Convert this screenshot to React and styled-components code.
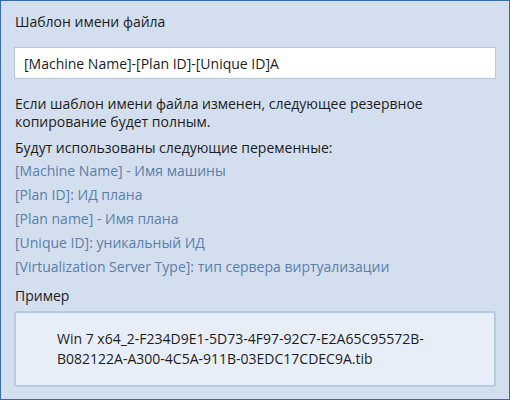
import styled, { createGlobalStyle } from "styled-components";

const GlobalStyle = createGlobalStyle`
  html, body {
    margin: 0;
    padding: 0;
    background: #d3deee;
  }
  body {
    font-family: "Open Sans", "Noto Sans", sans-serif;
  }
`;

const Panel = styled.div`
  box-sizing: border-box;
  width: 510px;
  height: 400px;
  border: 1px solid #3a6ab0;
  background: #d3deee;
  padding: 11px 13px 0 13px;
  display: flex;
  flex-direction: column;
  color: #1c1c1c;
  font-size: 14px;
`;

const Label = styled.div`
  line-height: 20px;
  padding-left: 1px;
  margin-bottom: ${(p) => p.$gap || 0}px;
`;

const Input = styled.input`
  box-sizing: border-box;
  width: 482px;
  height: 32px;
  border: 1px solid #b6c7e0;
  background: #fff;
  padding: 0 9px;
  font: inherit;
  font-size: 14px;
  color: #1c1c1c;
  outline: none;
  margin-bottom: 16px;
`;

const Para = styled.p`
  margin: 0 0 ${(p) => p.$gap || 0}px;
  padding-left: 1px;
  line-height: 18px;
`;

const VarList = styled.div`
  display: flex;
  flex-direction: column;
  gap: 4px;
  margin-top: 3px;
  margin-bottom: 9px;
`;

const Var = styled.div`
  padding-left: 1px;
  line-height: 20px;
  color: #5a7ea8;
`;

const Example = styled.div`
  box-sizing: border-box;
  width: 482px;
  height: 76px;
  margin-top: 5px;
  border: 2px solid #b8c9e2;
  border-radius: 3px;
  background: #e8eef7;
  padding: 16px 20px 0 41px;
  line-height: 20px;
`;

const vars = [
  "[Machine Name] - Имя машины",
  "[Plan ID]: ИД плана",
  "[Plan name] - Имя плана",
  "[Unique ID]: уникальный ИД",
  "[Virtualization Server Type]: тип сервера виртуализации",
];

export default function App() {
  return (
    <>
      <GlobalStyle />
      <Panel>
        <Label $gap={15}>Шаблон имени файла</Label>
        <Input defaultValue="[Machine Name]-[Plan ID]-[Unique ID]A" />
        <Para $gap={7}>
          Если шаблон имени файла изменен, следующее резервное
          <br />
          копирование будет полным.
        </Para>
        <Label>Будут использованы следующие переменные:</Label>
        <VarList>
          {vars.map((v) => (
            <Var key={v}>{v}</Var>
          ))}
        </VarList>
        <Label>Пример</Label>
        <Example>
          Win 7 x64_2-F234D9E1-5D73-4F97-92C7-E2A65C95572B-
          <br />
          B082122A-A300-4C5A-911B-03EDC17CDEC9A.tib
        </Example>
      </Panel>
    </>
  );
}
